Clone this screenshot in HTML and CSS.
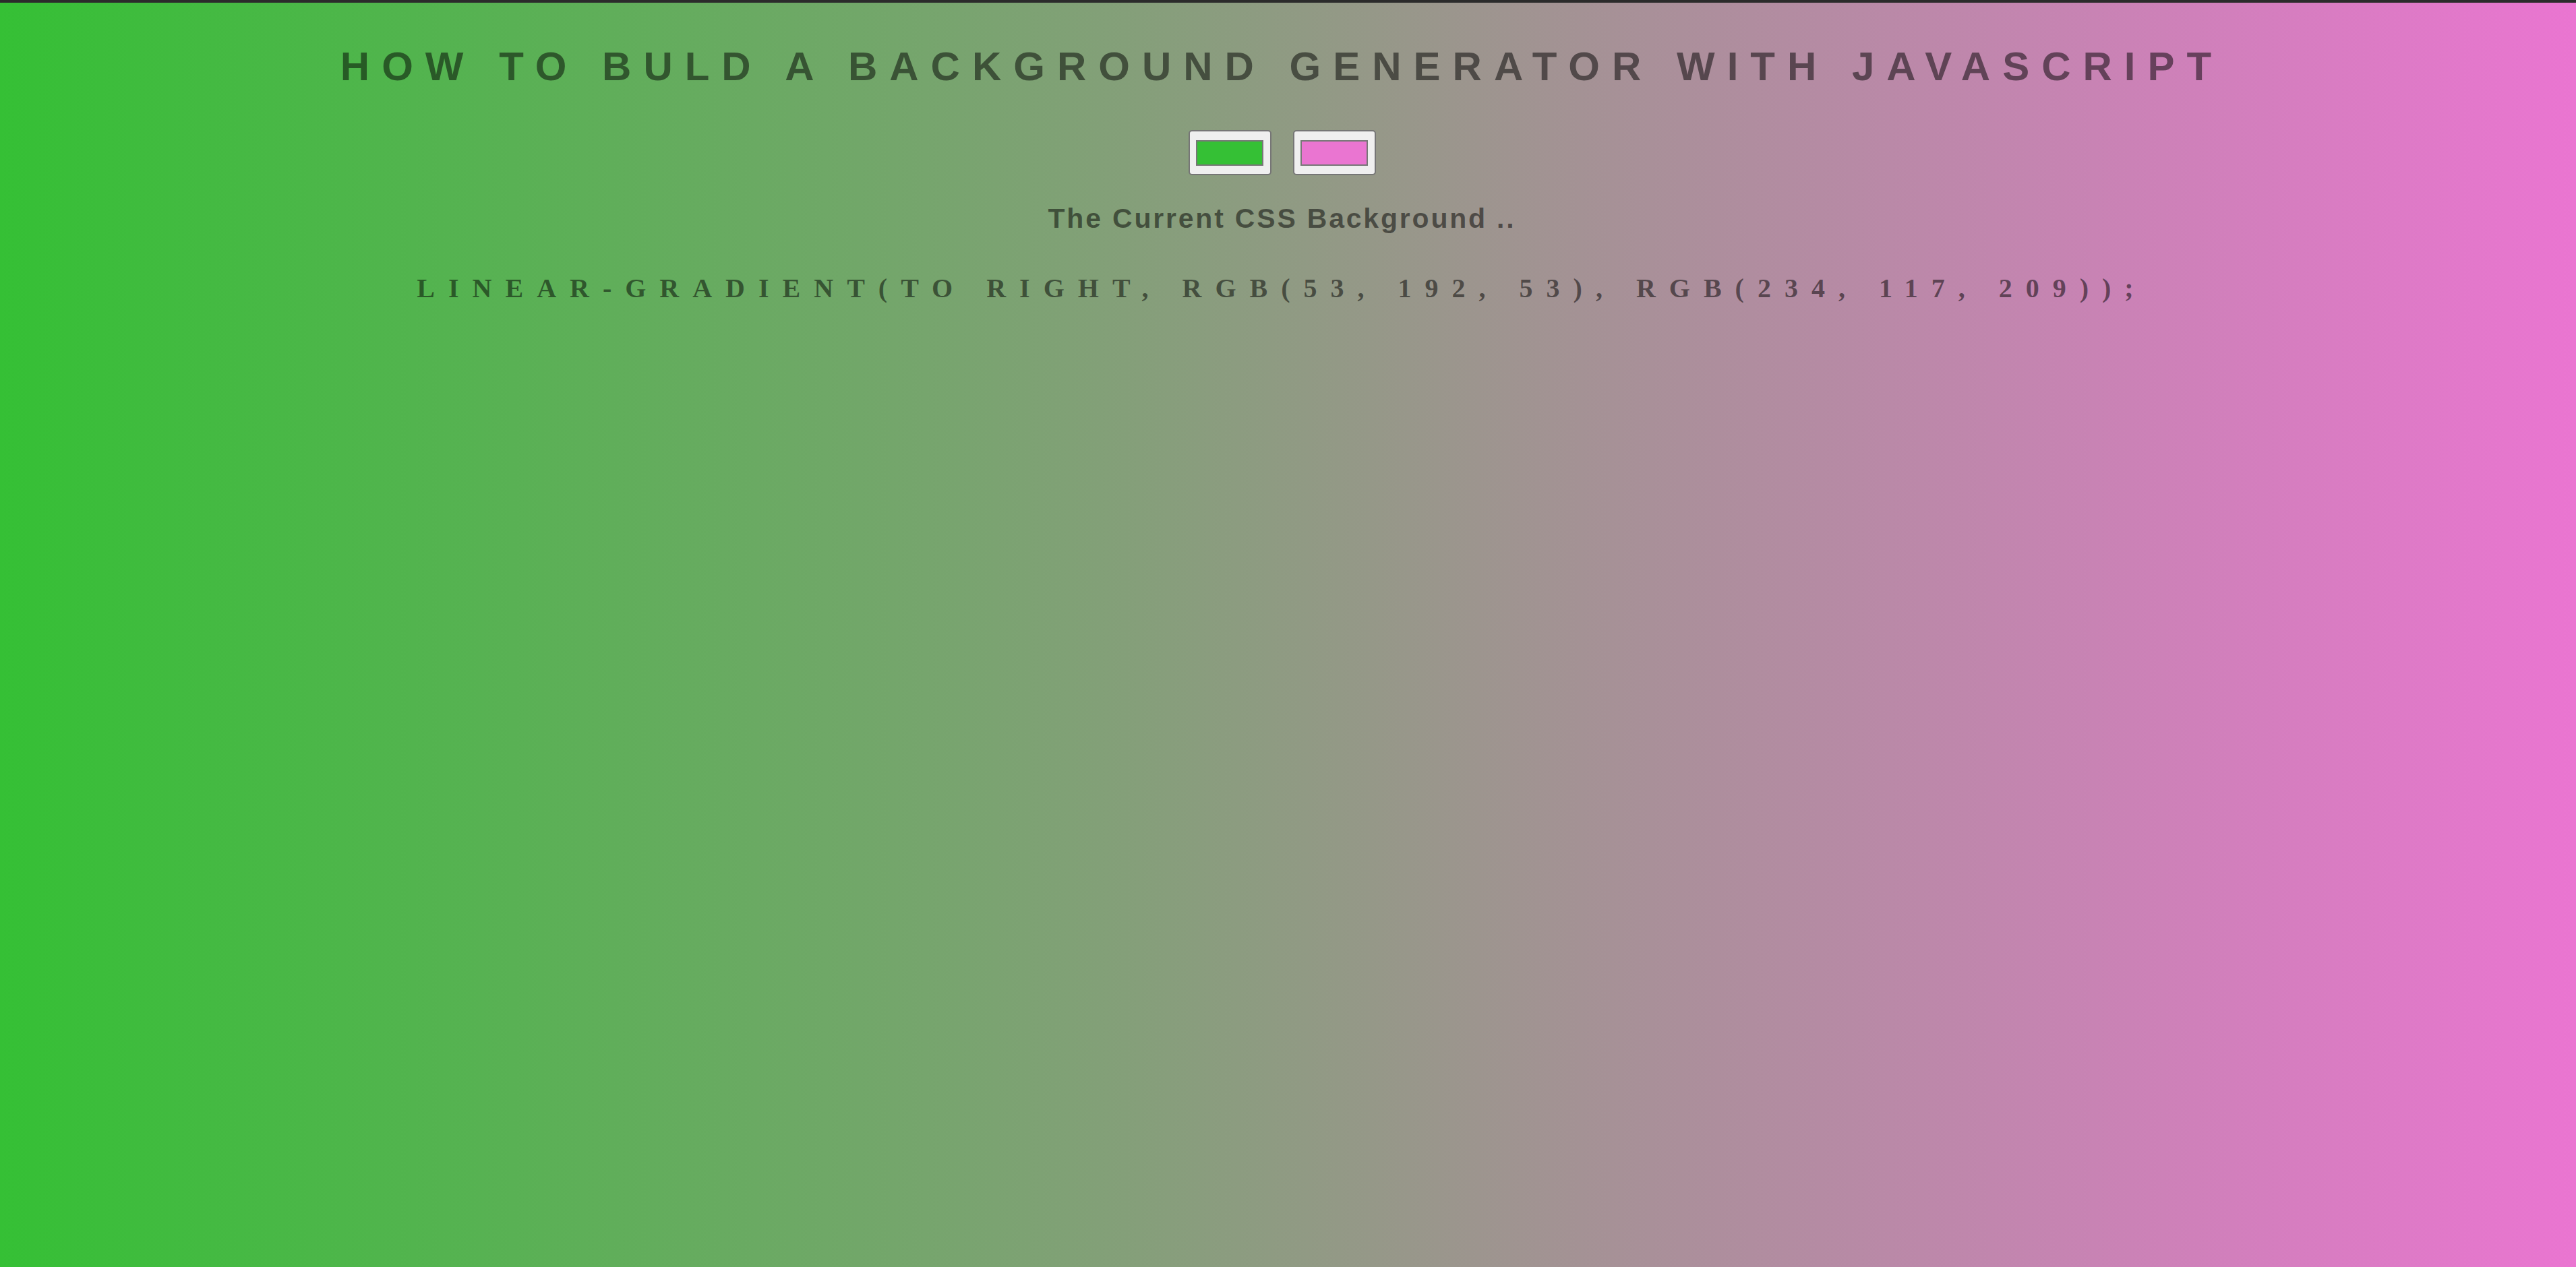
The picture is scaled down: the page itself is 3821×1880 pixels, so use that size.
FILE: index.html
```html
<!DOCTYPE html>
<html lang="en">
<head>
<meta charset="utf-8">
<title>Background Generator</title>
<link rel="stylesheet" href="styles.css">
</head>
<body>
  <h1 class="title">How to buld a background generator with javascript</h1>
  <div class="pickers">
    <div class="picker"><div class="swatch swatch-green"></div></div>
    <div class="picker"><div class="swatch swatch-pink"></div></div>
  </div>
  <h3 class="subtitle">The Current CSS Background ..</h3>
  <h3 class="css-value">linear-gradient(to right, rgb(53, 192, 53), rgb(234, 117, 209));</h3>
</body>
</html>
```
FILE: styles.css
```css
html {
  margin: 0;
  padding: 0;
}

body {
  margin: 0;
  min-height: 100vh;
  box-sizing: border-box;
  border-top: 4px solid #2b2b2b;
  padding-right: 18px;
  background: linear-gradient(to right, rgb(53, 192, 53), rgb(234, 117, 209));
  color: rgba(0, 0, 0, 0.5);
  font-family: "Liberation Sans", Arial, sans-serif;
  text-align: center;
  display: flex;
  flex-direction: column;
  align-items: center;
}

.title {
  margin: 60px 0 0;
  font-size: 60px;
  font-weight: 700;
  line-height: normal;
  letter-spacing: 18px;
  text-transform: uppercase;
}

.pickers {
  margin-top: 60px;
  display: flex;
  gap: 32px;
}

.picker {
  width: 123px;
  height: 67px;
  box-sizing: border-box;
  border: 2px solid #767676;
  border-radius: 5px;
  background: #efefef;
  display: flex;
  align-items: center;
  justify-content: center;
}

.swatch {
  width: 100px;
  height: 38px;
  box-sizing: border-box;
  border: 2px solid #777777;
}

.swatch-green {
  background: rgb(53, 192, 53);
}

.swatch-pink {
  background: rgb(234, 117, 209);
}

.subtitle {
  margin: 41px 0 0;
  font-size: 41px;
  font-weight: 700;
  line-height: normal;
  letter-spacing: 2.8px;
}

.css-value {
  margin: 56px 0 0;
  font-family: "Liberation Serif", "Times New Roman", serif;
  font-size: 40px;
  font-weight: 700;
  line-height: normal;
  letter-spacing: 20px;
  text-transform: uppercase;
}
```
